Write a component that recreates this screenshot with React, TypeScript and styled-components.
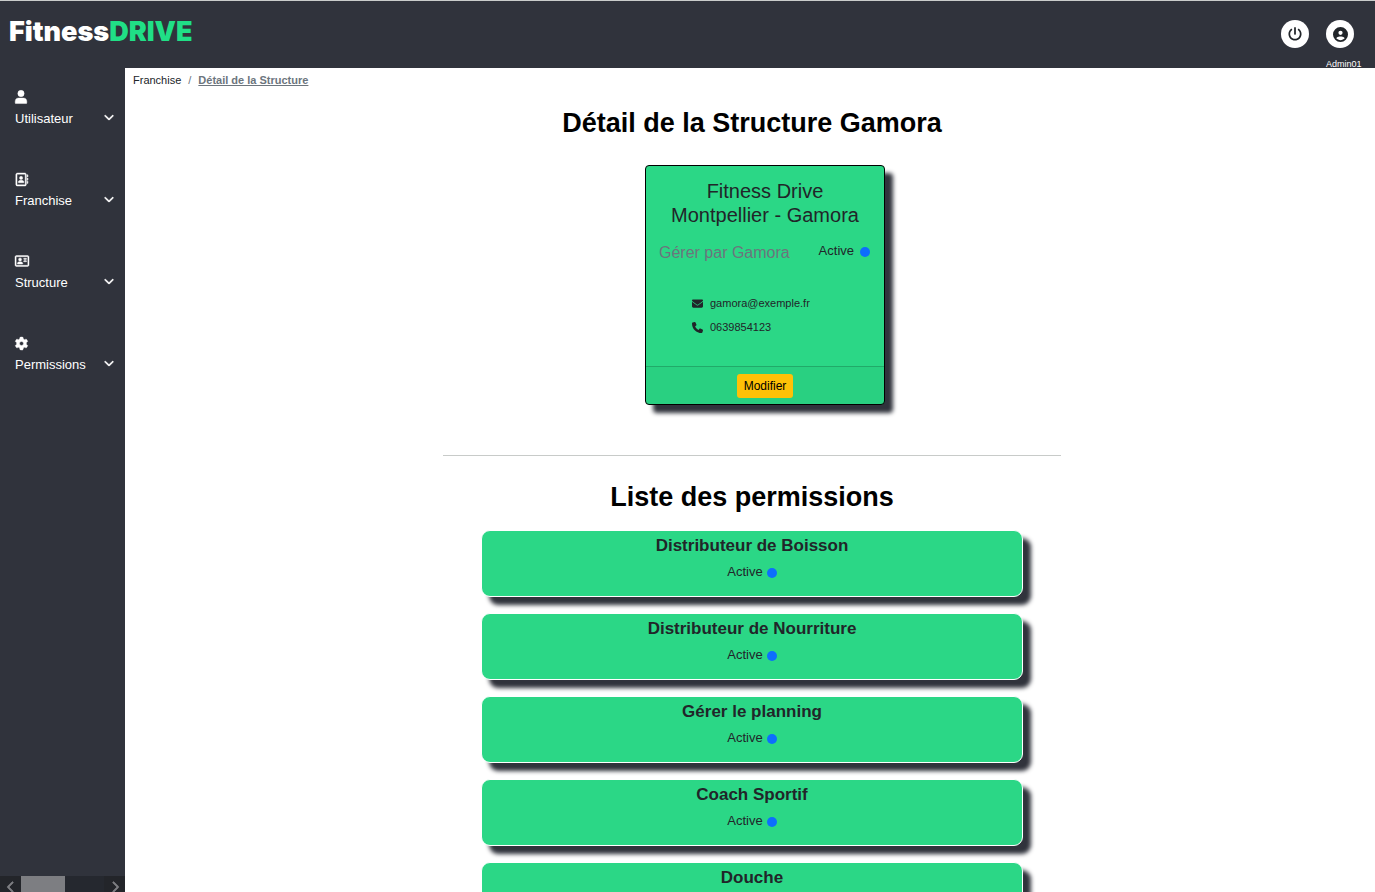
import React from "react";
import styled, { createGlobalStyle } from "styled-components";
import {
  FaRegAddressBook,
  FaRegAddressCard,
  FaGear,
  FaChevronDown,
  FaChevronLeft,
  FaChevronRight,
  FaPowerOff,
  FaCircleUser,
  FaEnvelope,
  FaPhone,
} from "react-icons/fa6";

const dark = "#30333c";
const green = "#2bd786";
const ink = "#212529";

const GlobalStyle = createGlobalStyle`
  * { box-sizing: border-box; }
  body {
    margin: 0;
    background: #fff;
    color: ${ink};
    font-family: "Liberation Sans", Arial, sans-serif;
    font-size: 13px;
  }
  h1, h2, h3, p, ul, ol { margin: 0; padding: 0; }
  ul, ol { list-style: none; }
  button { font-family: inherit; cursor: pointer; }
  svg { display: block; flex: none; }
`;

const Shell = styled.div`
  display: flex;
  flex-direction: column;
  height: 100vh;
  overflow: hidden;
`;

const Header = styled.header`
  display: flex;
  justify-content: space-between;
  align-items: flex-start;
  height: 68px;
  flex: none;
  padding: 0 13px 0 9px;
  border-top: 1px solid #c9cccb;
  background: ${dark};
`;

const Logo = styled.a`
  padding-top: 16px;
  color: #fff;
  font-family: "Arial Black", Inter, sans-serif;
  font-size: 27px;
  font-weight: 900;
  line-height: 30px;
  text-decoration: none;

  span { color: #20df86; }
`;

const HeaderActions = styled.div`
  display: flex;
  gap: 17px;
  padding-top: 19px;
`;

const Account = styled.div`
  width: 36px;
  color: #fff;
  font-size: 9px;
  line-height: 10px;

  p { padding-top: 11px; }
`;

const RoundButton = styled.button`
  display: flex;
  align-items: center;
  justify-content: center;
  width: 28px;
  height: 28px;
  padding: 0;
  border: 0;
  border-radius: 50%;
  background: #fff;
  color: ${ink};
`;

const Body = styled.div`
  display: flex;
  flex: 1;
  min-height: 0;
`;

const Sidebar = styled.nav`
  display: flex;
  flex-direction: column;
  justify-content: space-between;
  width: 125px;
  flex: none;
  background: ${dark};
`;

const Menu = styled.ul`
  display: flex;
  flex-direction: column;
  gap: 42px;
  padding: 22px 11px 0 15px;
`;

const MenuButton = styled.button`
  display: flex;
  flex-direction: column;
  gap: 5px;
  width: 100%;
  height: 40px;
  padding: 0;
  border: 0;
  background: none;
  color: #fff;
  font-size: 13px;
  line-height: 20px;
  text-align: left;
`;

const MenuIcon = styled.span`
  display: flex;
  align-items: center;
  height: 14px;

  svg { stroke: #fff; stroke-width: 16px; overflow: visible; }
`;

const MenuLabel = styled.span`
  display: flex;
  justify-content: space-between;
  align-items: center;
  width: 100%;

  svg {
    margin-bottom: 4px;
    stroke: #fff;
    stroke-width: 24px;
  }
`;

const ScrollTrack = styled.div`
  display: flex;
  height: 16px;
  background: #25282f;
  color: #7d7e82;
`;

const ScrollArrow = styled.span`
  display: flex;
  align-items: center;
  justify-content: center;
  width: 21px;
  padding-top: 5px;
  background: #23252a;

  svg { stroke: #7d7e82; stroke-width: 32px; }
`;

const ScrollThumb = styled.span`
  width: 44px;
  margin-right: auto;
  background: #7d7e82;
`;

const Main = styled.main`
  flex: 1;
  min-width: 0;
  padding: 0 4px 0 8px;
  overflow-y: auto;
  scrollbar-width: none;
`;

const Breadcrumb = styled.ol`
  display: flex;
  gap: 7px;
  padding-top: 4px;
  font-size: 11px;
  line-height: 16px;
  color: #6c757d;

  a { color: ${ink}; text-decoration: none; }
  a[aria-current] {
    color: #6c757d;
    font-weight: 700;
    text-decoration: underline;
  }
`;

const Title = styled.h1`
  color: #000;
  font-size: 27px;
  font-weight: 700;
  line-height: 32px;
  text-align: center;
`;

const Overview = styled.section`
  display: flex;
  flex-direction: column;
  align-items: center;
  gap: 26px;
  max-width: 618px;
  margin: 0 auto;
  padding: 19px 0 50px;
  border-bottom: 1px solid #c8cbc9;
`;

const StructureSlot = styled.div`
  padding-left: 26px;
`;

const StructureCard = styled.article`
  display: flex;
  flex-direction: column;
  width: 240px;
  height: 240px;
  border: 1px solid #000;
  border-radius: 4px;
  background: ${green};
  box-shadow: 8px 8px 4px ${dark};
`;

const CardBody = styled.div`
  flex: 1;
  padding: 13px;
`;

const CardTitle = styled.h2`
  font-size: 20px;
  font-weight: 400;
  line-height: 24px;
  text-align: center;
`;

const CardRow = styled.div`
  display: flex;
  justify-content: space-between;
  align-items: flex-start;
  padding: 16px 1px 0 0;
`;

const Manager = styled.p`
  color: #6c757d;
  font-size: 16px;
  line-height: 20px;
`;

const Status = styled.p<{ $gap: number }>`
  display: flex;
  align-items: center;
  justify-content: center;
  gap: ${(p) => p.$gap}px;
  font-size: 13px;
  line-height: 16px;

  &::after {
    content: "";
    width: 10px;
    height: 10px;
    margin-top: 2px;
    border-radius: 50%;
    background: #0d6efd;
  }
`;

const Contacts = styled.ul`
  padding: 28px 0 0 33px;
  font-size: 11px;
  line-height: 24px;

  li { display: flex; align-items: center; gap: 7px; }
`;

const CardFooter = styled.footer`
  display: flex;
  justify-content: center;
  padding: 7px 7px 6px;
  border-top: 1px solid rgba(0, 0, 0, 0.18);
  background: rgba(0, 0, 0, 0.03);
`;

const EditButton = styled.button`
  height: 24px;
  padding: 0 7px;
  border: 0;
  border-radius: 3px;
  background: #ffc107;
  color: #000;
  font-size: 12px;
  line-height: 24px;
`;

const Permissions = styled.section`
  max-width: 542px;
  margin: 0 auto;
  padding: 25px 0 16px;
`;

const PermissionList = styled.ul`
  display: flex;
  flex-direction: column;
  gap: 16px;
  padding-top: 17px;
`;

const PermissionCard = styled.li`
  height: 67px;
  padding-top: 5px;
  border: 1px solid #fff;
  border-radius: 9px;
  background: ${green};
  box-shadow: 8px 8px 4px ${dark};
  text-align: center;

  h3 {
    padding-bottom: 8px;
    font-size: 17px;
    line-height: 20px;
  }
`;

function UserIcon({ size }: { size: number }) {
  return (
    <svg width={size} height={size + 2} viewBox="0 0 448 512" fill="currentColor">
      <ellipse cx="224" cy="126" rx="118" ry="120" />
      <path d="M8 480V420C8 340 64 296 136 296H312C384 296 440 340 440 420V480Q440 500 420 500H28Q8 500 8 480Z" />
    </svg>
  );
}

const menu = [
  { label: "Utilisateur", Icon: UserIcon, size: 12 },
  { label: "Franchise", Icon: FaRegAddressBook, size: 13 },
  { label: "Structure", Icon: FaRegAddressCard, size: 14 },
  { label: "Permissions", Icon: FaGear, size: 13 },
];

const permissions = [
  "Distributeur de Boisson",
  "Distributeur de Nourriture",
  "Gérer le planning",
  "Coach Sportif",
  "Douche",
];

export default function App() {
  return (
    <Shell>
      <GlobalStyle />
      <Header>
        <Logo href="#">
          Fitness<span>DRIVE</span>
        </Logo>
        <HeaderActions>
          <RoundButton aria-label="Déconnexion">
            <FaPowerOff size={14} />
          </RoundButton>
          <Account>
            <RoundButton aria-label="Mon compte">
              <FaCircleUser size={15} />
            </RoundButton>
            <p>Admin01</p>
          </Account>
        </HeaderActions>
      </Header>
      <Body>
        <Sidebar>
          <Menu>
            {menu.map(({ label, Icon, size }) => (
              <li key={label}>
                <MenuButton>
                  <MenuIcon>
                    <Icon size={size} />
                  </MenuIcon>
                  <MenuLabel>
                    {label}
                    <FaChevronDown size={10} />
                  </MenuLabel>
                </MenuButton>
              </li>
            ))}
          </Menu>
          <ScrollTrack aria-hidden="true">
            <ScrollArrow>
              <FaChevronLeft size={12} />
            </ScrollArrow>
            <ScrollThumb />
            <ScrollArrow>
              <FaChevronRight size={12} />
            </ScrollArrow>
          </ScrollTrack>
        </Sidebar>
        <Main>
          <Breadcrumb>
            <li>
              <a href="#">Franchise</a>
            </li>
            <li aria-hidden="true">/</li>
            <li>
              <a href="#" aria-current="page">
                Détail de la Structure
              </a>
            </li>
          </Breadcrumb>
          <Overview>
            <Title>Détail de la Structure Gamora</Title>
            <StructureSlot>
              <StructureCard>
                <CardBody>
                  <CardTitle>Fitness Drive Montpellier - Gamora</CardTitle>
                  <CardRow>
                    <Manager>Gérer par Gamora</Manager>
                    <Status $gap={6}>Active</Status>
                  </CardRow>
                  <Contacts>
                    <li>
                      <FaEnvelope size={11} />
                      gamora@exemple.fr
                    </li>
                    <li>
                      <FaPhone size={11} />
                      0639854123
                    </li>
                  </Contacts>
                </CardBody>
                <CardFooter>
                  <EditButton>Modifier</EditButton>
                </CardFooter>
              </StructureCard>
            </StructureSlot>
          </Overview>
          <Permissions>
            <Title as="h2">Liste des permissions</Title>
            <PermissionList>
              {permissions.map((name) => (
                <PermissionCard key={name}>
                  <h3>{name}</h3>
                  <Status $gap={4}>Active</Status>
                </PermissionCard>
              ))}
            </PermissionList>
          </Permissions>
        </Main>
      </Body>
    </Shell>
  );
}
